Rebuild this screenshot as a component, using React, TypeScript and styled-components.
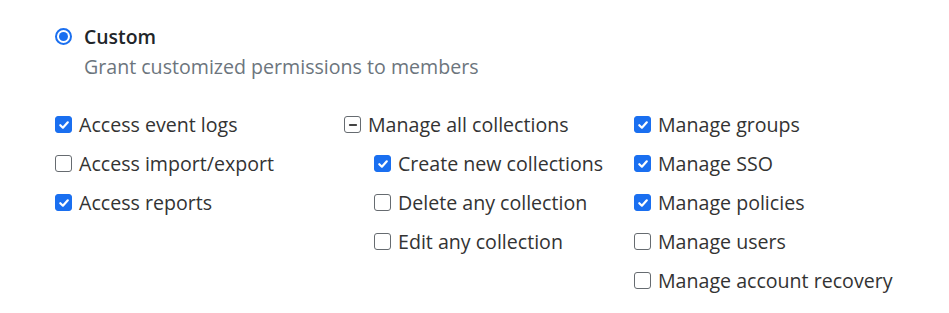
import styled, { createGlobalStyle } from "styled-components";

const GlobalStyle = createGlobalStyle`
  body {
    margin: 0;
    background: #ffffff;
    font-family: "Open Sans", "Liberation Sans", sans-serif;
    color: #212529;
  }
`;

const Page = styled.div`
  padding: 24px 0 0 55px;
`;

const RadioRow = styled.label`
  display: flex;
  align-items: center;
  gap: 12px;
  height: 24px;
`;

const Radio = styled.span`
  box-sizing: border-box;
  width: 17px;
  height: 17px;
  border-radius: 50%;
  border: 2px solid #1a6ff0;
  display: flex;
  align-items: center;
  justify-content: center;

  &::after {
    content: "";
    width: 9px;
    height: 9px;
    border-radius: 50%;
    background: #1a6ff0;
  }
`;

const RadioTitle = styled.span`
  font-size: 19.4px;
  font-weight: 600;
  color: #212529;
`;

const Hint = styled.div`
  margin: 5px 0 0 29px;
  font-size: 19.6px;
  color: #6c757d;
`;

const Columns = styled.div`
  display: grid;
  grid-template-columns: 289px 290px 290px;
  margin-top: 25px;
`;

const Column = styled.div`
  display: flex;
  flex-direction: column;
`;

const Item = styled.label<{ $nested?: boolean }>`
  display: flex;
  align-items: center;
  gap: 7px;
  height: 39px;
  padding-left: ${(p) => (p.$nested ? "30px" : "0")};
  font-size: 19.6px;
  color: #333333;
  white-space: nowrap;
`;

const Box = styled.span<{ $state: "on" | "off" | "mixed" }>`
  box-sizing: border-box;
  width: 17px;
  height: 17px;
  border-radius: 3px;
  flex: none;
  display: flex;
  align-items: center;
  justify-content: center;
  background: ${(p) => (p.$state === "on" ? "#1a6ff0" : "#ffffff")};
  border: 1px solid ${(p) => (p.$state === "on" ? "#1a6ff0" : "#666b70")};
`;

type State = "on" | "off" | "mixed";

const Check = ({ state }: { state: State }) => (
  <Box $state={state}>
    {state === "on" && (
      <svg width="12" height="12" viewBox="0 0 12 12">
        <path d="M2.3 6.2 L4.9 8.7 L9.8 3.3" fill="none" stroke="#fff" strokeWidth="2.2" strokeLinecap="round" strokeLinejoin="round" />
      </svg>
    )}
    {state === "mixed" && (
      <svg width="12" height="12" viewBox="0 0 12 12">
        <path d="M2.8 6 H9.2" stroke="#444" strokeWidth="1.8" strokeLinecap="round" />
      </svg>
    )}
  </Box>
);

type Perm = { label: string; state: State; nested?: boolean };

const columns: Perm[][] = [
  [
    { label: "Access event logs", state: "on" },
    { label: "Access import/export", state: "off" },
    { label: "Access reports", state: "on" },
  ],
  [
    { label: "Manage all collections", state: "mixed" },
    { label: "Create new collections", state: "on", nested: true },
    { label: "Delete any collection", state: "off", nested: true },
    { label: "Edit any collection", state: "off", nested: true },
  ],
  [
    { label: "Manage groups", state: "on" },
    { label: "Manage SSO", state: "on" },
    { label: "Manage policies", state: "on" },
    { label: "Manage users", state: "off" },
    { label: "Manage account recovery", state: "off" },
  ],
];

const App = () => {
  return (
    <>
      <GlobalStyle />
      <Page>
        <RadioRow>
          <Radio />
          <RadioTitle>Custom</RadioTitle>
        </RadioRow>
        <Hint>Grant customized permissions to members</Hint>
        <Columns>
          {columns.map((col, i) => (
            <Column key={i}>
              {col.map((p) => (
                <Item key={p.label} $nested={p.nested}>
                  <Check state={p.state} />
                  {p.label}
                </Item>
              ))}
            </Column>
          ))}
        </Columns>
      </Page>
    </>
  );
};

export default App;
